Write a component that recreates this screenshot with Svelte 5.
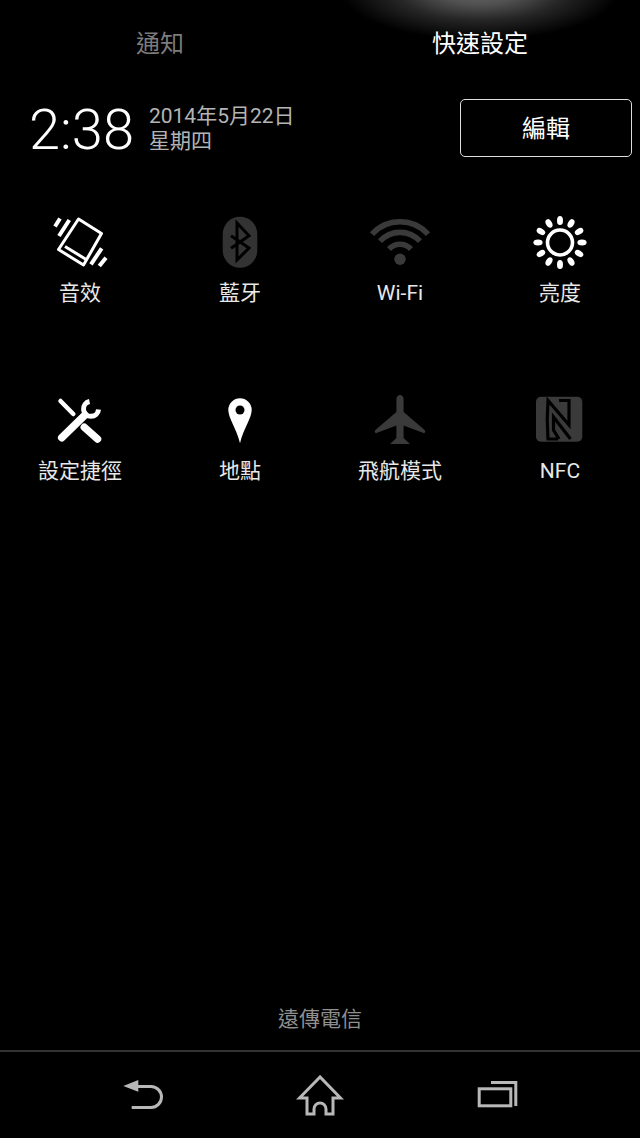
<script>
  // Quick settings tiles, the icon is picked by name in the markup
  const tiles = [
    { id: 'sound', label: '音效' },
    { id: 'bluetooth', label: '藍牙' },
    { id: 'wifi', label: 'Wi-Fi' },
    { id: 'brightness', label: '亮度' },
    { id: 'tools', label: '設定捷徑' },
    { id: 'location', label: '地點' },
    { id: 'airplane', label: '飛航模式' },
    { id: 'nfc', label: 'NFC' }
  ];

  const rays = Array.from({ length: 12 }, (_, i) => i * 30);
</script>

<div class="screen">
  <div class="glow"></div>

  <nav class="tabs">
    <span class="tab">通知</span>
    <span class="tab active">快速設定</span>
  </nav>

  <header class="status">
    <div class="clock">2:38</div>
    <div class="date">
      <span>2014年5月22日</span>
      <span>星期四</span>
    </div>
    <button class="edit">編輯</button>
  </header>

  <section class="grid">
    {#each tiles as tile}
      <div class="tile">
        <svg class="icon" viewBox="0 0 64 64" width="64" height="64">
          {#if tile.id === 'sound'}
            <g fill="none" stroke="#fff">
              <path d="M30.5 9 L53.5 23.5 L35.5 55 L10.5 39.5 Z" stroke-width="3" stroke-linejoin="round" />
              <path d="M17 36.5 L39 50" stroke-width="3" />
              <path d="M12 8.5 L7 16.5 M21.3 10 L11 26 M53.7 38.3 L43 54.3 M58 47.7 L51.3 56" stroke-width="4" />
            </g>
          {:else if tile.id === 'bluetooth'}
            <rect x="14.7" y="6.7" width="34.6" height="51" rx="17.3" fill="#333" />
            <path d="M23 25.7 L41 38 L29 50 V13 L41 25.7 L23 38.3" fill="none" stroke="#000" stroke-width="3" />
          {:else if tile.id === 'wifi'}
            <g fill="none" stroke="#3a3a3a" stroke-width="5.6">
              <path d="M4 24.2 A37.7 37.7 0 0 1 60 24.2" />
              <path d="M12 31.2 A27 27 0 0 1 52 31.2" />
              <path d="M21 39 A15 15 0 0 1 43 39" />
            </g>
            <circle cx="32" cy="49.3" r="5.7" fill="#3a3a3a" />
          {:else if tile.id === 'brightness'}
            <circle cx="32" cy="32.5" r="12.5" fill="none" stroke="#fff" stroke-width="3.6" />
            {#each rays as a}
              <ellipse cx="32" cy="10.5" rx="3" ry="4.6" fill="#fff" transform="rotate({a} 32 32.5)" />
            {/each}
          {:else if tile.id === 'tools'}
            <g fill="none" stroke="#fff" stroke-linecap="round">
              <path d="M12.5 13 L25.3 26" stroke-width="4.5" />
              <path d="M36.3 39.3 L49.5 51" stroke-width="7.5" />
              <path d="M13.7 49.7 L37 27" stroke-width="7.5" />
              <path d="M41.5 13.5 A7.5 7.5 0 1 0 50.5 21.5" stroke-width="5" stroke-linecap="butt" />
            </g>
          {:else if tile.id === 'location'}
            <path d="M32 10.3 a11.7 11.7 0 0 1 11.7 11.7 c0 8 -8 18 -11.7 33.3 c-3.7 -15.3 -11.7 -25.3 -11.7 -33.3 a11.7 11.7 0 0 1 11.7 -11.7 Z" fill="#fff" />
            <circle cx="32" cy="22" r="4.5" fill="#000" />
          {:else if tile.id === 'airplane'}
            <path d="M32 7 c2 0 3.6 1.8 3.6 4 V24 L56.6 42 c1 .8 .8 2.6 -.4 3.2 L35.6 37.5 V50 L42 56 H22 L28.4 50 V37.5 L7.8 45.2 c-1.2 -.6 -1.4 -2.4 -.4 -3.2 L28.4 24 V11 c0 -2 1.6 -4 3.6 -4 Z" fill="#3a3a3a" />
          {:else if tile.id === 'nfc'}
            <rect x="8" y="8.7" width="46.3" height="45" rx="5" fill="#3a3a3a" />
            <g fill="none" stroke="#000" stroke-width="3.2">
              <path d="M30 51 H20 C19 38 19 25 20 12.5 L41 37 V12.5 H31" />
              <path d="M42.5 51 L25.5 29 V42 L31 51" />
            </g>
          {/if}
        </svg>
        <span class="label">{tile.label}</span>
      </div>
    {/each}
  </section>

  <footer class="footer">
    <div class="carrier">遠傳電信</div>
    <div class="navbar">
      <div class="nav-item">
        <svg viewBox="0 0 48 48" width="48" height="48" fill="none" stroke="#b8b8b8" stroke-width="3">
          <path d="M4.3 15 L19.3 9 V20.7 Z" fill="#b8b8b8" stroke="none" />
          <path d="M18 15.5 H32 A10.5 10.5 0 0 1 32 36.5 H12.7" />
        </svg>
      </div>
      <div class="nav-item">
        <svg viewBox="0 0 48 48" width="48" height="48" fill="none" stroke="#b8b8b8" stroke-width="3">
          <path d="M24 6 L3.5 27 H11 V43 H18 V38 A6 6 0 0 1 30 38 V43 H37 V27 H44.5 Z" />
        </svg>
      </div>
      <div class="nav-item">
        <svg viewBox="0 0 48 48" width="48" height="48" fill="none" stroke="#b8b8b8" stroke-width="3">
          <rect x="6.2" y="17.8" width="31.6" height="17" />
          <path d="M18 11.5 H42.8 V35" />
        </svg>
      </div>
    </div>
  </footer>
</div>

<style>
  :global(body) {
    background: #000;
  }

  .screen {
    position: relative;
    display: flex;
    flex-direction: column;
    width: 640px;
    height: 1138px;
    overflow: hidden;
    background: #000;
    color: #fff;
    font-family: Roboto, "Noto Sans CJK TC", sans-serif;
  }

  .glow {
    position: absolute;
    top: -60px;
    left: 340px;
    width: 280px;
    height: 100px;
    border-radius: 50%;
    background: radial-gradient(closest-side, #666 0%, #505050 30%, #262626 60%, #000 100%);
  }

  .tabs {
    position: relative;
    display: grid;
    grid-template-columns: 1fr 1fr;
    height: 82px;
  }

  .tab {
    align-self: center;
    text-align: center;
    font-size: 24px;
    color: #7c7c7c;
  }

  .tab.active {
    color: #fff;
  }

  .status {
    display: flex;
    align-items: center;
    height: 58px;
    margin-top: 17px;
    padding: 0 8px 0 29px;
  }

  .clock {
    padding-top: 4px;
    font-size: 56px;
    font-weight: 300;
    line-height: 1;
  }

  .date {
    display: flex;
    flex-direction: column;
    margin-left: 15px;
    padding-top: 2px;
    font-size: 21px;
    line-height: 25px;
    color: #b4b4b4;
  }

  .edit {
    width: 172px;
    height: 58px;
    margin-left: auto;
    padding-bottom: 5px;
    border: 1px solid #ddd;
    border-radius: 5px;
    background: none;
    color: #fff;
    font-family: inherit;
    font-size: 24px;
  }

  .grid {
    display: grid;
    grid-template-columns: repeat(4, 160px);
    grid-auto-rows: 178px;
    margin-top: 53px;
  }

  .tile {
    display: flex;
    flex-direction: column;
    align-items: center;
  }

  .icon {
    display: block;
  }

  .label {
    font-size: 21px;
    line-height: 28px;
    margin-top: 5px;
    color: #e8e8e8;
  }

  .footer {
    margin-top: auto;
  }

  .carrier {
    height: 52px;
    text-align: center;
    font-size: 21px;
    line-height: 42px;
    color: #8f8f8f;
  }

  .navbar {
    display: flex;
    justify-content: center;
    height: 86px;
    border-top: 2px solid #333;
  }

  .nav-item {
    display: flex;
    justify-content: center;
    width: 177px;
    padding-top: 19px;
  }
</style>
